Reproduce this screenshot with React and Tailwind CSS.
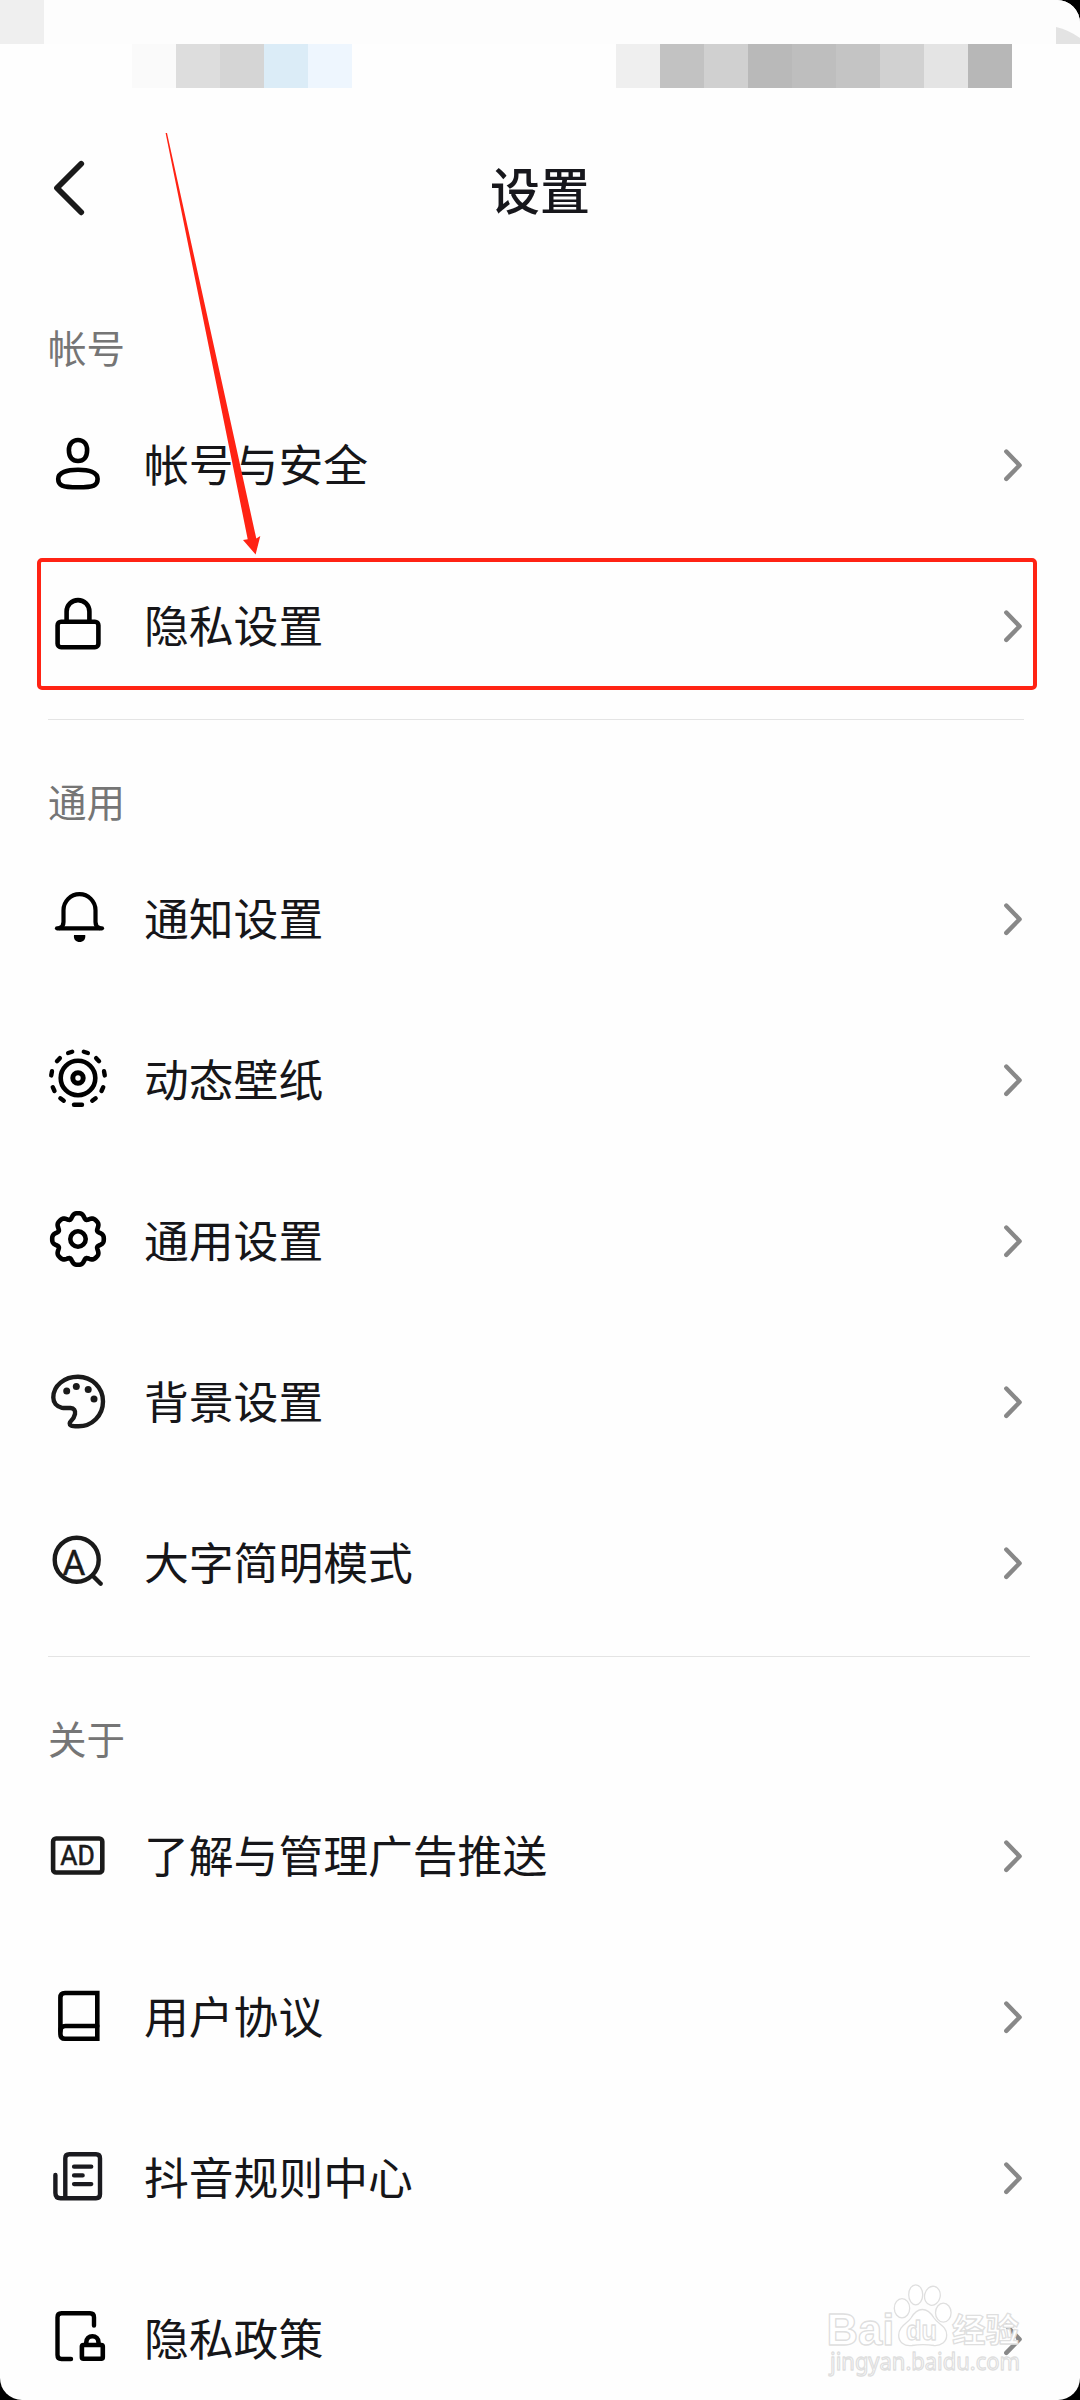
import React from "react";

const statusLeft = ["bg-[#fafafa]", "bg-[#dddddd]", "bg-[#d5d5d5]", "bg-[#dbecf7]", "bg-[#eef6fe]"];
const statusRight = [
  "bg-[#efefef]", "bg-[#c2c2c2]", "bg-[#d0d0d0]", "bg-[#b9b9b9]", "bg-[#bebebe]",
  "bg-[#c4c4c4]", "bg-[#d1d1d1]", "bg-[#e4e4e4]", "bg-[#b7b7b7]",
];

function Icon({ children, color = "#000" }) {
  return (
    <svg
      className="h-[72px] w-[72px] shrink-0"
      viewBox="0 0 72 72"
      fill="none"
      stroke={color}
      strokeWidth="4.6"
      strokeLinecap="round"
      strokeLinejoin="round"
    >
      {children}
    </svg>
  );
}

const UserIcon = () => (
  <Icon>
    <path d="M36 11c5.400 0 9.100 4 9.100 10.200 0 7-3.500 10.800-9.100 10.800s-9.100-3.800-9.100-10.800c0-6.200 3.700-10.200 9.100-10.200Z" />
    <path d="M16.200 50C16.200 43.500 25 40.700 36 40.700S55.600 43.500 55.600 50C55.600 56.500 52 58.200 36 58.200S16.200 56.500 16.200 50Z" />
  </Icon>
);

const LockIcon = () => (
  <Icon>
    <rect x="15.600" y="31.700" width="40.800" height="25.500" rx="3.500" />
    <path d="M24.600 31V21.500a11.400 11.400 0 0 1 22.800 0V31" />
  </Icon>
);

const BellIcon = () => (
  <Icon>
    <path strokeWidth="4.2" d="M15 45.300H60" />
    <path strokeWidth="4.2" d="M17.500 45C20.500 44 21.500 42 21.500 39V27.200a16 16 0 0 1 32 0V39C53.500 42 54.500 44 57.500 45" />
    <path d="M32 52H43.200C44 56.500 41 59 37.600 59S31.200 56.500 32 52Z" fill="#000" stroke="none" />
  </Icon>
);

const dashAngles = [-107, -73, -43, -10, 24.500, 53.500, 126.500, 155.500, 190, 223];

const WallpaperIcon = () => (
  <Icon>
    <circle cx="36" cy="34" r="17.300" />
    <circle cx="36" cy="34" r="5.200" strokeWidth="5" />
    {dashAngles.map((a) => (
      <path key={a} d="M62.800 31.900V36.100" strokeWidth="4.4" transform={`rotate(${a} 36 34)`} />
    ))}
    <path d="M32 60.800H40" strokeWidth="4.4" />
  </Icon>
);

const gearPath =
  Array.from({ length: 192 }, (_, i) => {
    const t = (i / 192) * Math.PI * 2;
    const r = 23.900 + 2.500 * Math.cos(8 * t) - 0.600 * Math.cos(16 * t);
    return `${i ? "L" : "M"}${(36 + r * Math.cos(t)).toFixed(2)} ${(34 + r * Math.sin(t)).toFixed(2)}`;
  }).join("") + "Z";

const GearIcon = () => (
  <Icon>
    <path d={gearPath} />
    <circle cx="36" cy="34" r="7.700" />
  </Icon>
);

const PaletteIcon = () => (
  <Icon color="#1a1a1a">
    <path strokeWidth="4.4" d="M36 10.700C50 10.700 61 21.500 61 35.500S50 60.500 36 60.300C33 60.300 30.500 60.200 29 59.500C27 58.500 27.500 56.500 29 55C31 53 32.500 50.500 33 48C33.600 44.500 32 42.300 28.500 42C26 41.800 23 42.300 20 41.800C14.500 40.500 11.300 36.500 11.300 31.500C11.300 19.500 22.500 10.700 36 10.700Z" />
    <g fill="#1a1a1a" stroke="none">
      <circle cx="24.700" cy="25" r="3.500" />
      <circle cx="34.300" cy="20.500" r="3.500" />
      <circle cx="46.200" cy="23.400" r="3.500" />
      <circle cx="52" cy="33" r="3.500" />
    </g>
  </Icon>
);

const LargeTextIcon = () => (
  <Icon color="#1a1a1a">
    <circle cx="34.700" cy="32.700" r="22" strokeWidth="4.4" />
    <path d="M50.700 48.700L58.700 56.700" strokeWidth="4.4" />
    <text x="31.800" y="48" textAnchor="middle" fill="#1a1a1a" strokeWidth="0.5" fontSize="35" fontWeight="400" fontFamily="Roboto, sans-serif">A</text>
  </Icon>
);

const AdIcon = () => (
  <Icon color="#1a1a1a">
    <rect x="11.100" y="18.500" width="49.200" height="34" rx="3" />
    <text x="18.300" y="45.300" textLength="34.500" lengthAdjust="spacingAndGlyphs" fill="#1a1a1a" strokeWidth="0.6" fontSize="27.500" fontWeight="400" fontFamily="Roboto, sans-serif">AD</text>
  </Icon>
);

const BookIcon = () => (
  <Icon>
    <path strokeLinejoin="miter" d="M55.300 12H23q-4.600 0-4.600 4.600V53.200q0 4.600 4.600 4.600H55.300Z" />
    <path d="M18.400 50q0-5 5-5H55.300" />
  </Icon>
);

const RulesIcon = () => (
  <Icon color="#1a1a1f">
    <path strokeWidth="4.400" d="M13.400 33V51q0 5.200 5.200 5.200H54q4 0 4-4V16.200q0-4-4-4H27.300q-4 0-4 4V56" />
    <path strokeWidth="4.200" d="M32 24.700H49.300M32 33.400H40.700M32 42.100H49.300" />
  </Icon>
);

const PolicyIcon = () => (
  <Icon>
    <path strokeWidth="4.400" d="M52 22.600V14.300q0-4-4-4H19.500q-4 0-4 4V52q0 4 4 4H29" />
    <rect x="39.900" y="42" width="20.900" height="13.800" rx="1.500" />
    <path d="M44.300 41V39.300a6.100 6.100 0 0 1 12.200 0V41" />
  </Icon>
);

const sections = [
  {
    title: "帐号",
    rows: [
      { icon: UserIcon, label: "帐号与安全" },
      { icon: LockIcon, label: "隐私设置", marked: true },
    ],
  },
  {
    title: "通用",
    rows: [
      { icon: BellIcon, label: "通知设置" },
      { icon: WallpaperIcon, label: "动态壁纸" },
      { icon: GearIcon, label: "通用设置" },
      { icon: PaletteIcon, label: "背景设置" },
      { icon: LargeTextIcon, label: "大字简明模式" },
    ],
  },
  {
    title: "关于",
    rows: [
      { icon: AdIcon, label: "了解与管理广告推送" },
      { icon: BookIcon, label: "用户协议" },
      { icon: RulesIcon, label: "抖音规则中心" },
      { icon: PolicyIcon, label: "隐私政策" },
    ],
  },
];

function Row({ icon: RowIcon, label, marked }) {
  return (
    <div className="relative flex h-[161px] items-center pr-[56px] pl-[42px]">
      <RowIcon />
      <span className="ml-[30px] flex-1 pb-[2px] text-[44.8px] leading-none text-[#161619]">{label}</span>
      <svg className="h-[36px] w-[22px]" viewBox="0 0 22 36" fill="none" stroke="#888" strokeWidth="4.4" strokeLinecap="round" strokeLinejoin="round">
        <path d="M4.300 4.500L17.600 18.200L4.300 31.900" />
      </svg>
      {marked && <div className="absolute top-[13px] left-[37px] h-[132px] w-[1000px] rounded-[5px] border-4 border-[#ff2314]" />}
    </div>
  );
}

function Watermark() {
  return (
    <svg className="absolute top-[2280px] left-[820px] h-[120px] w-[240px]" viewBox="0 0 240 120" fill="#fff" stroke="#dfdfdf" strokeWidth="1.3" strokeLinejoin="round">
      <text x="6.500" y="64.500" textLength="68" lengthAdjust="spacingAndGlyphs" fontSize="44" fontWeight="700" fontFamily="'Liberation Sans', sans-serif">Bai</text>
      <ellipse cx="82" cy="28.200" rx="7.700" ry="9.600" />
      <ellipse cx="95.700" cy="14.800" rx="7" ry="10" />
      <ellipse cx="112.400" cy="15.800" rx="7.800" ry="9.600" transform="rotate(12 112.400 15.800)" />
      <ellipse cx="123.300" cy="32.700" rx="7.800" ry="9.500" />
      <path d="M102.300 29.500C108 29.500 111 33 114 38C118 44 126.700 46 126.700 55C126.700 62 121 66 114 65.500C108 64.500 98 64.500 92 65.500C84 66.500 78.500 62 78.700 55C79 46 87 44 91 38C94 33 97 29.500 102.300 29.500Z" />
      <text x="86" y="59.500" textLength="31" lengthAdjust="spacingAndGlyphs" fontSize="27" fontWeight="700" fontFamily="'Liberation Sans', sans-serif">du</text>
      <text x="132" y="61.500" textLength="67" lengthAdjust="spacingAndGlyphs" fontSize="33" fontWeight="700" fontFamily="'Noto Sans CJK SC', sans-serif">经验</text>
      <text x="10" y="90" textLength="190" lengthAdjust="spacingAndGlyphs" fontSize="23" fontWeight="400" fontFamily="'Noto Sans', sans-serif">jingyan.baidu.com</text>
    </svg>
  );
}

export default function App() {
  return (
    <div className="h-[2400px] w-[1080px] overflow-hidden bg-black">
      <div className="relative h-[2400px] w-[1080px] overflow-hidden rounded-tr-[23px] rounded-br-[22px] rounded-bl-[22px] bg-[#fefefe] font-['Noto_Sans_CJK_SC',sans-serif]">
        <div className="flex h-[44px] items-end justify-between bg-[#fdfdfd]">
          <div className="h-[44px] w-[44px] bg-[#efefef]" />
          <svg className="h-[17px] w-[24px]" viewBox="0 0 24 17">
            <path d="M0 0Q13 3 24 11V17H0Z" fill="#e3e3e3" />
          </svg>
        </div>
        <div className="flex h-[44px] justify-between pr-[68px] pl-[132px]">
          <div className="flex">
            {statusLeft.map((c, i) => <div key={i} className={`w-[44px] ${c}`} />)}
          </div>
          <div className="flex">
            {statusRight.map((c, i) => <div key={i} className={`w-[44px] ${c}`} />)}
          </div>
        </div>

        <header className="flex h-[204px] items-center justify-between px-[50px]">
          <svg className="h-[60px] w-[40px]" viewBox="0 0 40 60" fill="none" stroke="#1a1a1a" strokeWidth="5.8" strokeLinecap="round" strokeLinejoin="round">
            <path d="M31.200 3.800L7 28L31.200 52.300" />
          </svg>
          <h1 className="pb-[5px] text-[50px] leading-none font-medium text-[#17171c]">设置</h1>
          <div className="w-[40px]" />
        </header>

        {sections.map((s, i) => (
          <section key={s.title}>
            {i > 0 && (
              <div className={i === 1 ? "mt-[13px] mr-[56px] ml-[48px] h-px bg-[#e4e4e4]" : "mt-[13px] mr-[50px] ml-[48px] h-px bg-[#e4e4e4]"} />
            )}
            <h2 className={i === 0 ? "mt-[18px] flex h-[74px] items-center pb-[2px] pl-[48px] text-[38.5px] leading-none text-[#757575]" : "mt-[44px] flex h-[74px] items-center pb-[2px] pl-[48px] text-[38.5px] leading-none text-[#757575]"}>
              {s.title}
            </h2>
            {s.rows.map((r) => <Row key={r.label} {...r} />)}
          </section>
        ))}

        <svg className="absolute top-[130px] left-[160px] h-[428px] w-[106px]" viewBox="160 130 106 428">
          <path d="M165.600 133H167L256.300 538.500L260.300 536L255.600 554.500L243 540L247.700 539.200Z" fill="#ff2314" />
        </svg>
        <Watermark />
      </div>
    </div>
  );
}
